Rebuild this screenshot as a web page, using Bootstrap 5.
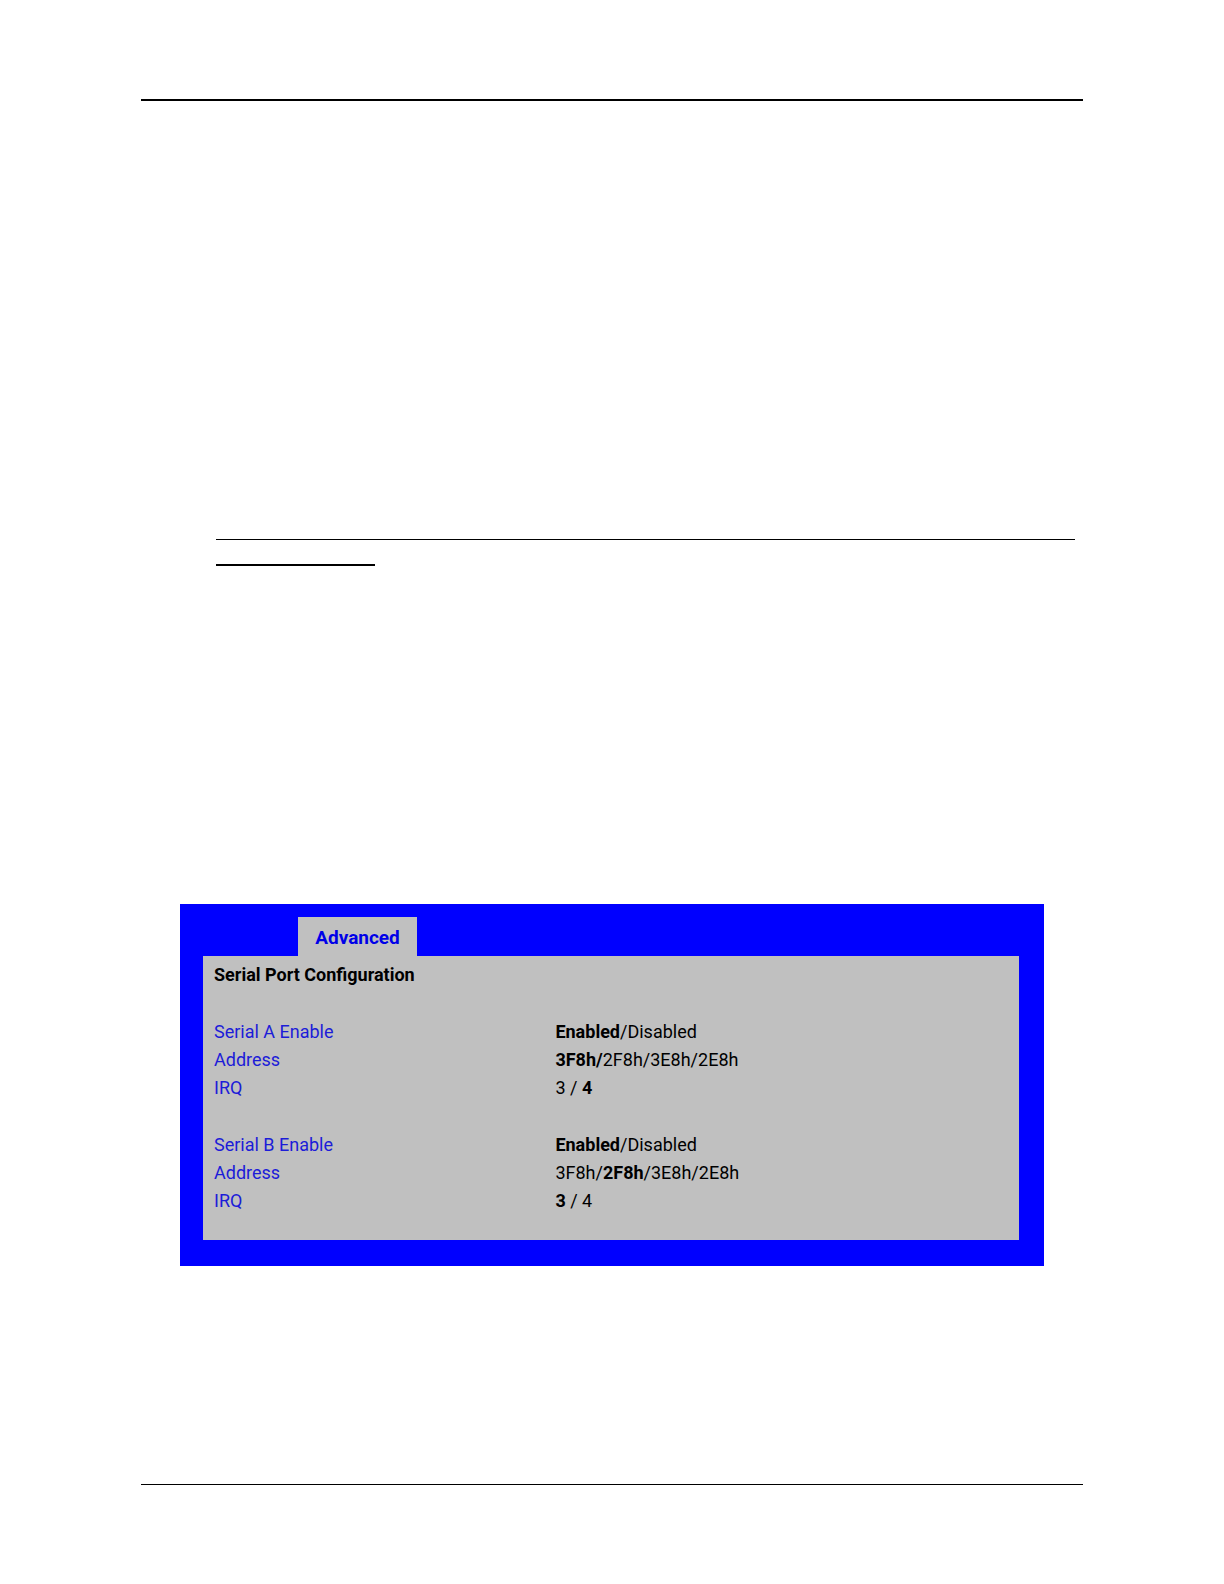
<!DOCTYPE html>
<html lang="en">
<head>
<meta charset="utf-8">
<meta name="viewport" content="width=device-width, initial-scale=1">
<title>Serial Port Configuration</title>
<link href="https://cdn.jsdelivr.net/npm/bootstrap@5.3.0/dist/css/bootstrap.min.css" rel="stylesheet">
<style>
  body { background: #fff; font-family: Roboto, "Liberation Sans", sans-serif; font-size: 18px; line-height: 28px; color: #000; }
  .sheet { max-width: 942px; padding: 99px 0; }
  .rule-thin, .rule-thick { border: 0; margin: 0; opacity: 1; background: #000; height: 1px; }
  .rule-thick { height: 2px; }
  .heading-rules { padding: 438px 8px 338px 75px; }
  .heading-rules .rule-thick { width: 159px; margin-top: 24px; }
  .setup { background: #00f; margin: 0 39px 218px 39px; padding: 13px 25px 26px 23px; }
  .setup-tabs { padding-left: 95px; }
  .setup-tab { background: #c0c0c0; color: #0000e8; border: 0; padding: 7px 0 4px; width: 119px; font-size: 19px; font-weight: 700; }
  .setup-panel { background: #c0c0c0; padding: 5px 11px 25px; }
  .setup-title { font-size: 18px; line-height: 28px; font-weight: 700; margin: 0 0 29px; }
  .options { width: 100%; table-layout: fixed; }
  .options th { width: 43%; font-weight: 400; color: #1c1cd8; padding: 0; }
  .options td { padding: 0; }
  .options tbody + tbody::before { content: ""; display: table-row; height: 29px; }
</style>
<script src="https://cdn.jsdelivr.net/npm/bootstrap@5.3.0/dist/js/bootstrap.bundle.min.js"></script>
</head>
<body>
<main class="sheet container-fluid">
  <hr class="rule-thick">
  <div class="heading-rules">
    <hr class="rule-thin">
    <hr class="rule-thick">
  </div>
  <section class="setup">
    <div class="setup-tabs d-flex" role="tablist">
      <button type="button" class="setup-tab" role="tab" id="advanced-tab" aria-selected="true" aria-controls="advanced">Advanced</button>
    </div>
    <div class="setup-panel" id="advanced" role="tabpanel" aria-labelledby="advanced-tab">
      <h1 class="setup-title">Serial Port Configuration</h1>
      <table class="options">
        <tbody>
          <tr><th scope="row">Serial A Enable</th><td><b>Enabled</b>/Disabled</td></tr>
          <tr><th scope="row">Address</th><td><b>3F8h/</b>2F8h/3E8h/2E8h</td></tr>
          <tr><th scope="row">IRQ</th><td>3 / <b>4</b></td></tr>
        </tbody>
        <tbody>
          <tr><th scope="row">Serial B Enable</th><td><b>Enabled</b>/Disabled</td></tr>
          <tr><th scope="row">Address</th><td>3F8h/<b>2F8h</b>/3E8h/2E8h</td></tr>
          <tr><th scope="row">IRQ</th><td><b>3</b> / 4</td></tr>
        </tbody>
      </table>
    </div>
  </section>
  <hr class="rule-thin">
</main>
</body>
</html>
